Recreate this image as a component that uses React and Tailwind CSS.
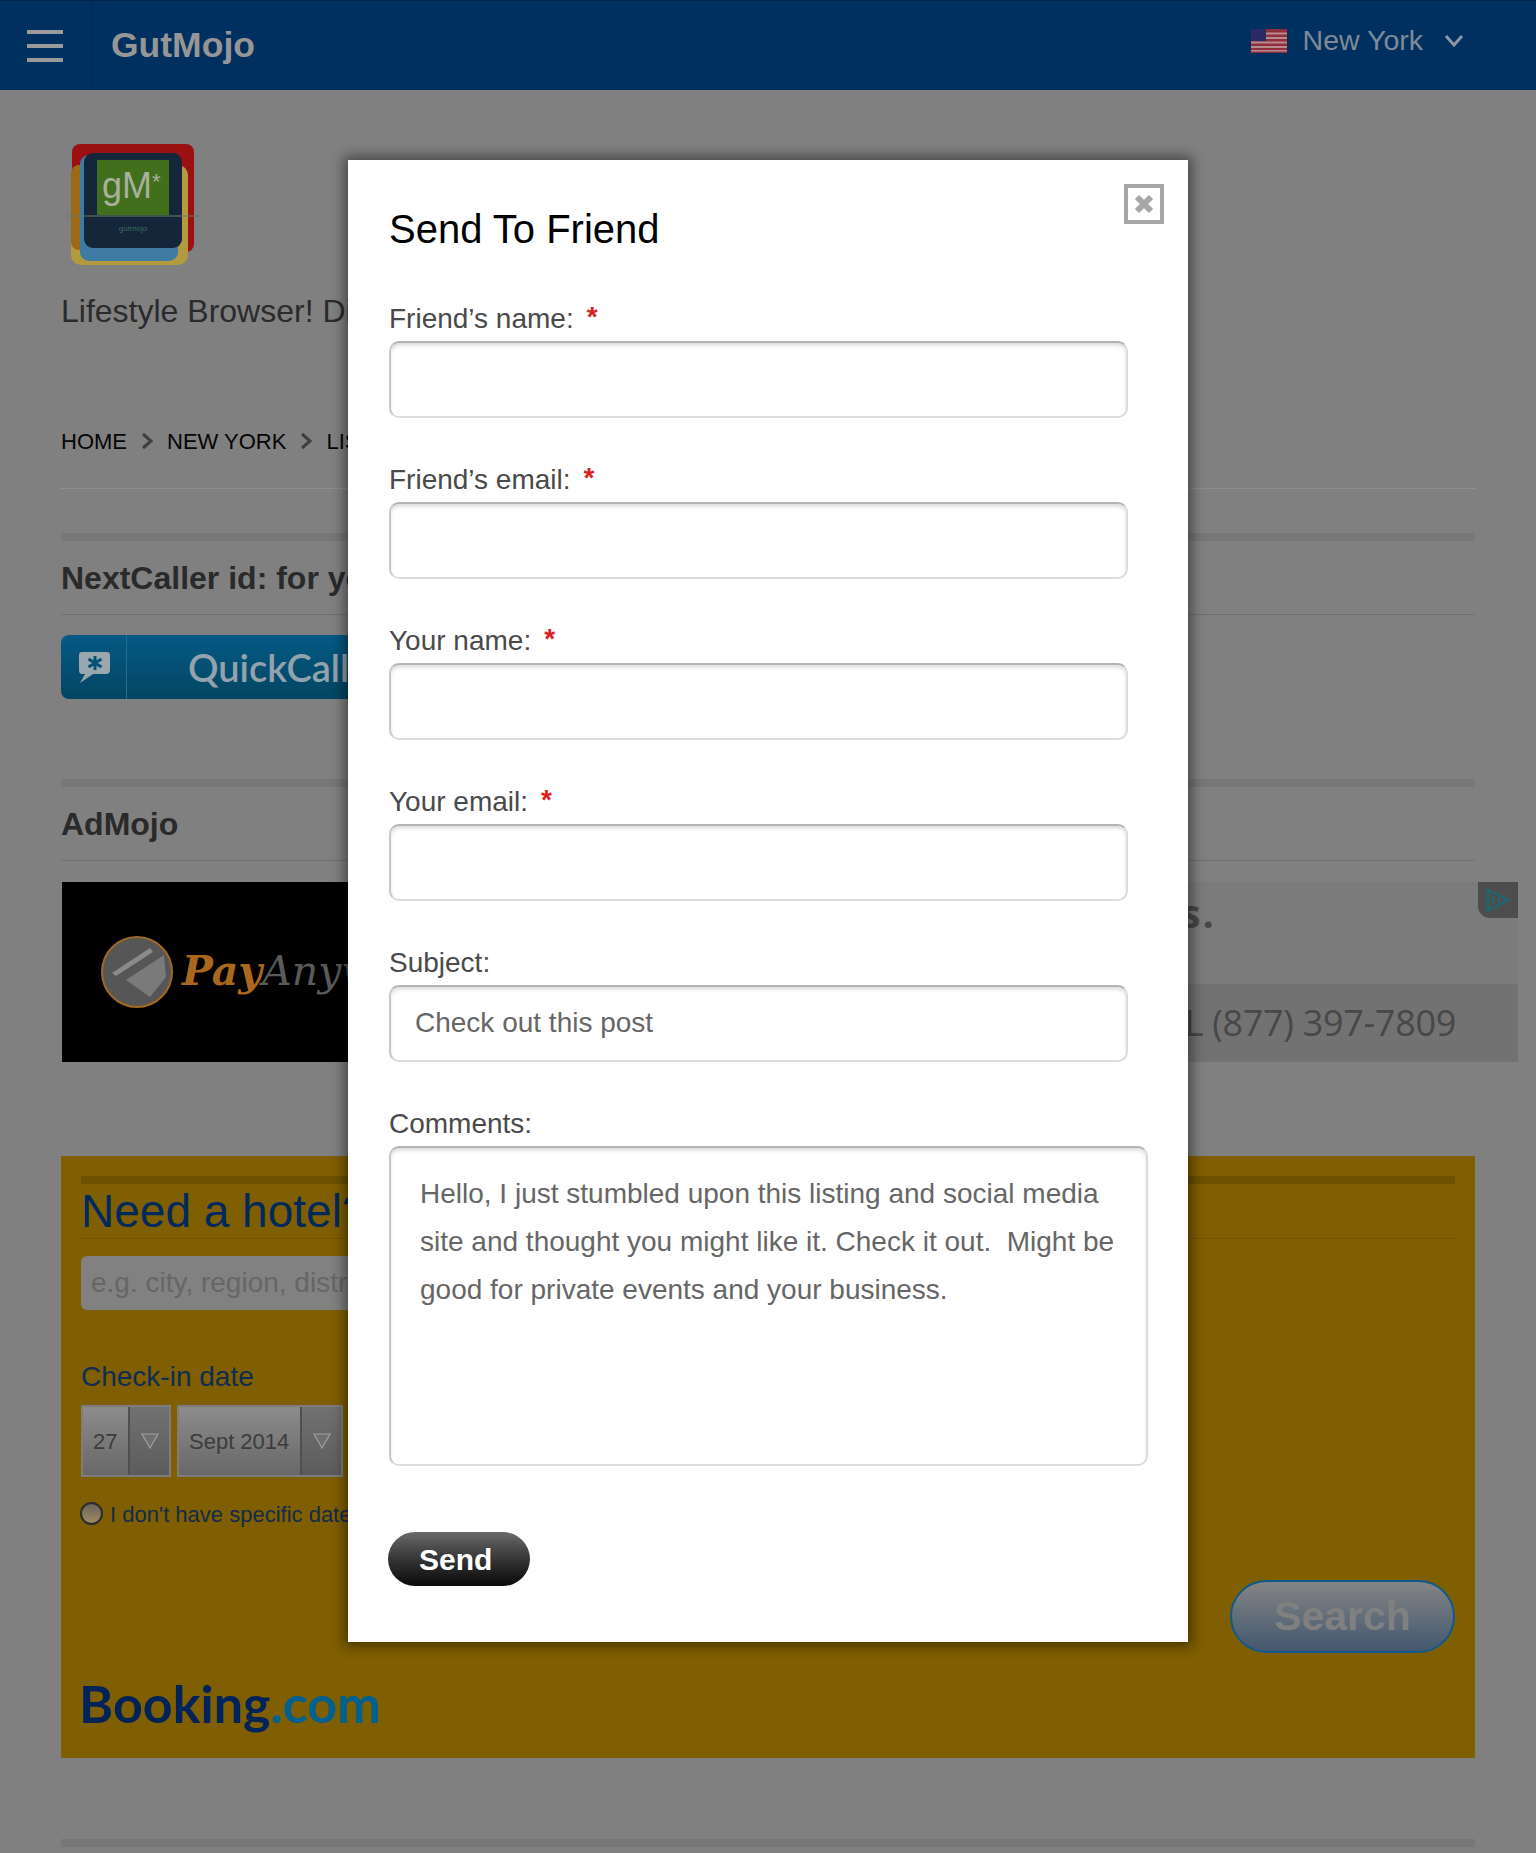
const F = { fontFamily: '"Liberation Sans", Arial, sans-serif' };

function Field({ label, req, value }) {
  return (
    <div className="mb-[42.5px]">
      <div className="h-[40px] flex items-center text-[28px] leading-[40px] text-[#4a4a4a]">
        <span>{label}</span>
        {req && <span className="ml-[13px] -mt-[5px] text-[28px] font-bold leading-none text-[#d9201f]">*</span>}
      </div>
      <div className="mt-[2px] w-[739px] h-[76.5px] rounded-[10px] border-2 border-[#dcdcdc] border-l-[#c8c8c8] border-t-[#b4b4b4] shadow-[inset_0_3px_4px_-1px_rgba(0,0,0,0.16)] flex items-center px-[24px] text-[28px] text-[#666]">
        {value}
      </div>
    </div>
  );
}

function Band() {
  return <div className="h-[8px] bg-[#777777]" />;
}

function Logo() {
  return (
    <svg width="136" height="124" viewBox="0 0 136 124" className="block">
      <rect x="6" y="1" width="122" height="108" rx="8" fill="#9b1010" />
      <rect x="5" y="22" width="117" height="100" rx="10" fill="#b49a3e" />
      <rect x="5" y="22" width="40" height="85" rx="8" fill="#9a6a18" />
      <rect x="14" y="12" width="98" height="106" rx="9" fill="#3f7ca3" />
      <rect x="18" y="10" width="98" height="95" rx="9" fill="#14263a" />
      <rect x="31" y="17" width="72" height="55" fill="#426f1c" />
      <text x="36" y="55" fontSize="36" fill="#a9b09f" style={F}>gM<tspan fontSize="22" dy="-9">*</tspan></text>
      <line x1="0" y1="73" x2="135" y2="73" stroke="#6b7a66" strokeWidth="1" />
      <text x="67" y="88" fontSize="8" textAnchor="middle" fill="#3f6a5a" style={F}>gutmojo</text>
    </svg>
  );
}

function Flag() {
  return (
    <svg width="36" height="24" viewBox="0 0 36 24" className="block">
      <rect width="36" height="24" fill="#8f2f3c" />
      <rect y="3.5" width="36" height="2" fill="#b88a8e" />
      <rect y="8" width="36" height="2" fill="#b88a8e" />
      <rect y="12.5" width="36" height="2" fill="#b88a8e" />
      <rect y="17" width="36" height="2" fill="#b88a8e" />
      <rect y="21" width="36" height="1.5" fill="#b88a8e" />
      <rect width="15" height="12" fill="#2b2a66" />
    </svg>
  );
}

function Select({ text, w, arrow }) {
  return (
    <div style={{ width: w }} className="h-[72px] flex border-2 border-[#7d7d7d] bg-gradient-to-b from-[#8c8c8c] to-[#686868]">
      <div className="flex-1 flex items-center pl-[10px] text-[22px] text-[#3c3c3c]">{text}</div>
      <div style={{ width: arrow }} className="border-l-2 border-[#4f4f4f] bg-gradient-to-b from-[#717171] to-[#5c5c5c] flex items-center justify-center">
        <svg width="20" height="18" viewBox="0 0 20 18"><path d="M2 2 H18 L10 16 Z" fill="#707070" stroke="#a0a0a0" strokeWidth="1.2" /></svg>
      </div>
    </div>
  );
}

export default function App() {
  return (
    <div style={F} className="relative w-[1536px] h-[1853px] overflow-hidden bg-[#808080]">
      <header className="h-[90px] bg-[#003060] border-t border-[#00254c] flex items-center relative">
        <div className="w-[92px] h-full border-r border-[#00264e] flex flex-col justify-center gap-[10px] pl-[27px] shrink-0">
          <div className="w-[36px] h-[4px] bg-[#9a9a9a]" />
          <div className="w-[36px] h-[4px] bg-[#9a9a9a]" />
          <div className="w-[36px] h-[4px] bg-[#9a9a9a]" />
        </div>
        <div className="ml-[19px] mt-[1px] text-[35.5px] font-bold text-[#969696]">GutMojo</div>
        <div className="ml-auto mr-[72px] -mt-[10px] flex items-center">
          <Flag />
          <span className="ml-[16px] text-[28.5px] text-[#7f8a97]">New York</span>
          <svg className="ml-[21px]" width="20" height="14" viewBox="0 0 20 14" fill="none"><path d="M2 2 L10 11 L18 2" stroke="#8d97a3" strokeWidth="3" /></svg>
        </div>
      </header>

      <main className="px-[61px]">
        <div className="pt-[53px] pl-[5px]"><Logo /></div>
        <div className="mt-[24px] text-[32px] leading-[40px] text-[#2b2b2b] whitespace-nowrap">Lifestyle Browser! Discover what is happening nearby</div>

        <nav className="mt-[95px] h-[30px] flex items-center text-[22px] text-[#050505] whitespace-nowrap">
          <span>HOME</span>
          <svg className="mx-[14px]" width="12" height="18" viewBox="0 0 12 18" fill="none"><path d="M2 2 L10 9 L2 16" stroke="#3f3f3f" strokeWidth="3" /></svg>
          <span>NEW YORK</span>
          <svg className="mx-[14px]" width="12" height="18" viewBox="0 0 12 18" fill="none"><path d="M2 2 L10 9 L2 16" stroke="#3f3f3f" strokeWidth="3" /></svg>
          <span>LISTINGS</span>
        </nav>
        <div className="mt-[32px] border-t border-dotted border-[#9a9a9a]" />

        <section className="mt-[44px]">
          <Band />
          <h2 className="h-[73px] flex items-center text-[32px] font-bold text-[#2a2a2a] whitespace-nowrap">NextCaller id: for your business</h2>
          <div className="h-px bg-[#6f6f6f]" />
          <div className="mt-[20px] w-[700px] h-[64px] rounded-[8px] bg-gradient-to-b from-[#055a85] to-[#034562] flex items-center">
            <div className="w-[66px] h-full border-r border-[#2b6b8c] flex items-center justify-center">
              <svg width="34" height="34" viewBox="0 0 34 34">
                <path d="M5 2 H30 Q33 2 33 5 V20 Q33 24 29 24 H16 L3 33 L8 24 H5 Q2 24 2 20 V5 Q2 2 5 2 Z" fill="#9aa7ae" />
                <path d="M18 6 V20 M11.5 9 L24.5 17 M24.5 9 L11.5 17" stroke="#045274" strokeWidth="3" />
              </svg>
            </div>
            <span className="ml-[61px] text-[38px] font-semibold text-[#93a3ad]" style={{ fontFamily: 'Lato, sans-serif' }}>QuickCall</span>
          </div>
        </section>

        <section className="mt-[80px]">
          <Band />
          <h2 className="h-[73px] flex items-center text-[32px] font-bold text-[#2a2a2a]">AdMojo</h2>
          <div className="h-px bg-[#6f6f6f]" />
          <div className="relative mt-[21px] ml-px w-[1456px] h-[180px] flex">
            <div className="w-[800px] bg-black flex items-center pl-[38px] shrink-0">
              <svg width="74" height="74" viewBox="0 0 74 74" className="shrink-0">
                <circle cx="37" cy="37" r="35" fill="#565656" stroke="#a06a22" strokeWidth="2" />
                <path d="M12 38 L50 13 L53 17 L16 41 Z" fill="#8a8a8a" />
                <path d="M26 45 L64 20 L66 42 L50 62 Z" fill="#7a7a7a" />
              </svg>
              <span className="ml-[8px] text-[41px] italic whitespace-nowrap" style={{ fontFamily: '"DejaVu Serif", serif' }}>
                <span className="font-bold text-[#a9681c]">Pay</span>
                <span className="text-[#5a5a5a]">Anywhere</span>
              </span>
            </div>
            <div className="flex-1 bg-[#7b7b7b] flex flex-col overflow-hidden" style={{ fontFamily: '"Open Sans", sans-serif' }}>
              <div className="h-[102px] pt-[6px] pr-[302px] text-right text-[40px] leading-[50px] font-bold tracking-[2px] text-[#484848] whitespace-nowrap">Pay bills.</div>
              <div className="flex-1 bg-[#727272] flex items-center justify-end pr-[62px] text-[36px] tracking-[-0.3px] text-[#484848] whitespace-nowrap">CALL (877) 397-7809</div>
            </div>
            <div className="absolute right-0 top-0 w-[40px] h-[36px] bg-[#4d4d4d] rounded-bl-[12px] flex items-center justify-center">
              <svg width="26" height="26" viewBox="0 0 26 26" fill="none"><path d="M3 3 L23 13 L3 24 Z" stroke="#1e6672" strokeWidth="2.5" /><path d="M8 10 V17 M14 10 V16" stroke="#1e6672" strokeWidth="2" /></svg>
            </div>
          </div>
        </section>

        <section className="mt-[94px] h-[602px] bg-[#805f00] px-[20px] pt-[20px] relative">
          <div className="h-[8px] bg-[#6e5200]" />
          <h2 className="h-[54px] flex items-center text-[46px] text-[#002a5e] whitespace-nowrap">Need a hotel?</h2>
          <div className="h-px bg-[#735500]" />
          <div className="mt-[17px] w-[900px] h-[54px] rounded-[6px] bg-[#818181] flex items-center px-[10px] text-[28px] text-[#666] whitespace-nowrap">e.g. city, region, district or specific hotel</div>
          <div className="mt-[47px] h-[40px] flex items-center text-[28px] text-[#0f2c52]">Check-in date</div>
          <div className="mt-[8px] flex gap-[6px]">
            <Select text="27" w={90} arrow={41} />
            <Select text="Sept 2014" w={166} arrow={41} />
          </div>
          <div className="mt-[21px] flex items-center whitespace-nowrap text-[22px] text-[#132a4c]">
            <div className="-ml-px w-[23px] h-[23px] rounded-full border-2 border-[#2c2c2c] bg-gradient-to-b from-[#6a655a] to-[#a08a62] -mt-[3px]" />
            <span className="ml-[7px]">I don't have specific dates yet</span>
          </div>
          <button className="absolute right-[20px] top-[424px] w-[225px] h-[73px] rounded-full border-2 border-[#0f5a8c] bg-gradient-to-b from-[#848484] to-[#43586f] text-[41px] font-bold text-[#808080]">Search</button>
          <div className="absolute left-[18px] top-[512px] text-[52px] leading-[70px] font-bold whitespace-nowrap" style={{ fontFamily: 'Lato, sans-serif' }}>
            <span className="text-[#00235a]">Booking</span><span className="text-[#00608f]">.com</span>
          </div>
        </section>

        <div className="mt-[81px]"><Band /></div>
      </main>

      <div className="absolute left-[348px] top-[160px] w-[840px] h-[1482px] bg-white shadow-[0_0_12px_4px_rgba(0,0,0,0.45)] pl-[41px] pt-[45px]">
        <button className="absolute right-[24px] top-[24px] w-[40px] h-[40px] border-4 border-[#a6a6a6] flex items-center justify-center">
          <svg width="20" height="20" viewBox="0 0 20 20"><path d="M3 3 L17 17 M17 3 L3 17" stroke="#a6a6a6" strokeWidth="6" /></svg>
        </button>
        <h1 className="h-[48px] text-[40px] leading-[48px] font-normal text-black">Send To Friend</h1>
        <div className="mt-[46px]">
          <Field label="Friend’s name:" req />
          <Field label="Friend’s email:" req />
          <Field label="Your name:" req />
          <Field label="Your email:" req />
          <Field label="Subject:" value="Check out this post" />
        </div>
        <div className="h-[40px] flex items-center text-[28px] text-[#4a4a4a]">Comments:</div>
        <div className="mt-[2px] w-[759px] h-[320px] rounded-[10px] border-2 border-[#dcdcdc] border-l-[#c8c8c8] border-t-[#b4b4b4] shadow-[inset_0_3px_4px_-1px_rgba(0,0,0,0.16)] pl-[29px] pt-[22px] text-[28px] leading-[48px] text-[#666] whitespace-pre">
          {"Hello, I just stumbled upon this listing and social media\nsite and thought you might like it. Check it out.  Might be\ngood for private events and your business."}
        </div>
        <button className="mt-[66px] -ml-px block w-[142px] h-[54px] rounded-full bg-gradient-to-b from-[#6a6a6a] to-[#0a0a0a] text-left pl-[31px] text-[30px] font-bold text-white">Send</button>
      </div>
    </div>
  );
}
